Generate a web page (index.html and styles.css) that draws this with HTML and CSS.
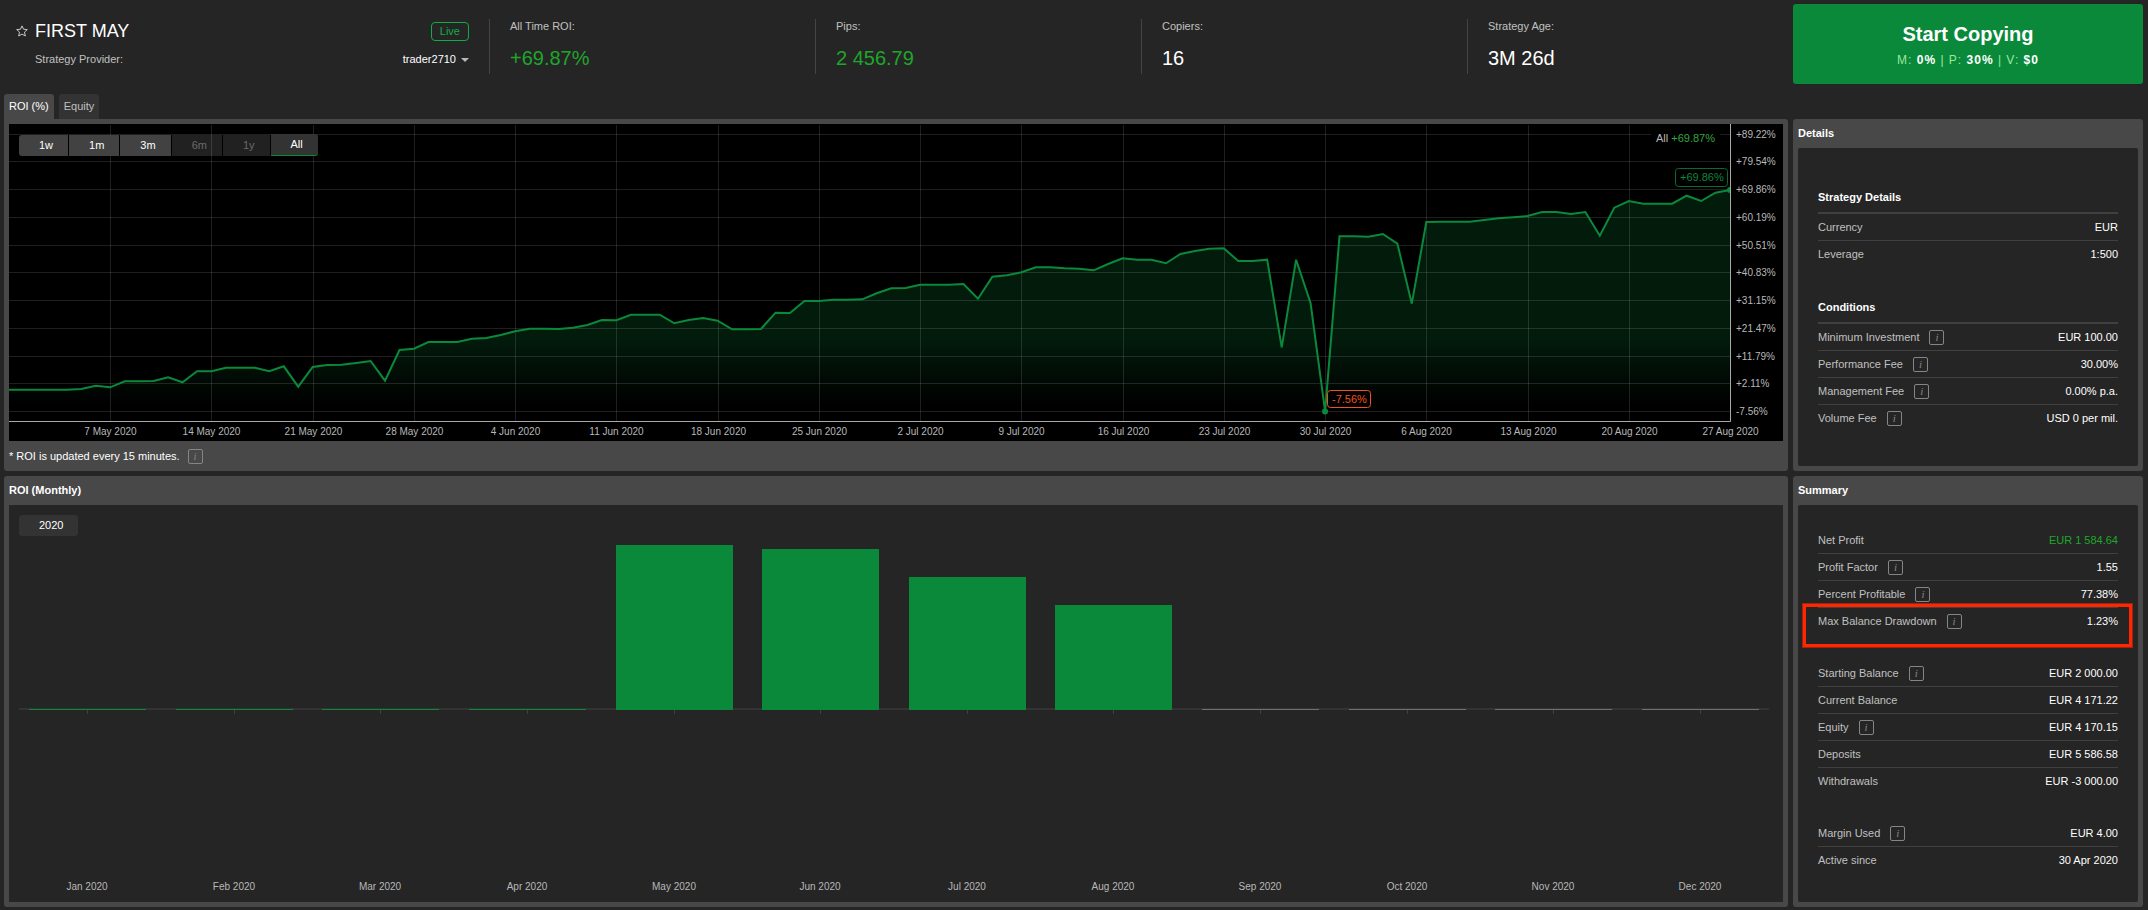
FILE: index.html
```html
<!DOCTYPE html>
<html lang="en">
<head>
    <meta charset="UTF-8">
    <meta name="viewport" content="width=device-width, initial-scale=1.0">
    <title>FIRST MAY</title>
    <link rel="stylesheet" href="styles.css">
</head>
<body>
<header class="header">
    <div class="strategy">
        <div class="strategy-row">
            <button class="star" aria-label="Add to favourites">
                <svg width="12" height="12" viewBox="0 0 12 12"><path d="M6 0.9L7.5 4.2L11.3 4.6L8.5 7.1L9.3 11L6 9.1L2.7 11L3.5 7.1L0.7 4.6L4.5 4.2Z"/></svg>
            </button>
            <h1>FIRST MAY</h1>
            <span class="live">Live</span>
        </div>
        <div class="strategy-row provider">
            <span class="label">Strategy Provider:</span>
            <button class="trader">trader2710</button>
        </div>
    </div>
    <div class="stat"><span class="label">All Time ROI:</span><span class="stat-value green">+69.87%</span></div>
    <div class="stat"><span class="label">Pips:</span><span class="stat-value green">2 456.79</span></div>
    <div class="stat"><span class="label">Copiers:</span><span class="stat-value">16</span></div>
    <div class="stat"><span class="label">Strategy Age:</span><span class="stat-value">3M 26d</span></div>
    <button class="copy">
        <span class="copy-title">Start Copying</span>
        <span class="copy-fees">M: <b>0%</b> | P: <b>30%</b> | V: <b>$0</b></span>
    </button>
</header>

<nav class="tabs">
    <button class="tab active">ROI (%)</button>
    <button class="tab">Equity</button>
</nav>

<main class="content">
    <section class="panel panel-roi">
        <div class="chart">
            <svg id="roiChart" class="roi-chart"></svg>
            <div class="buttons">
                <button>1w</button>
                <button>1m</button>
                <button>3m</button>
                <button disabled>6m</button>
                <button disabled>1y</button>
                <button class="selected">All</button>
            </div>
        </div>
        <p class="note">* ROI is updated every 15 minutes. <i class="info">i</i></p>
    </section>

    <section class="panel">
        <h2>Details</h2>
        <div class="box details">
            <h3>Strategy Details</h3>
            <dl>
                <div class="row"><dt>Currency</dt><dd>EUR</dd></div>
                <div class="row"><dt>Leverage</dt><dd>1:500</dd></div>
            </dl>
            <h3>Conditions</h3>
            <dl>
                <div class="row"><dt>Minimum Investment <i class="info">i</i></dt><dd>EUR 100.00</dd></div>
                <div class="row"><dt>Performance Fee <i class="info">i</i></dt><dd>30.00%</dd></div>
                <div class="row"><dt>Management Fee <i class="info">i</i></dt><dd>0.00% p.a.</dd></div>
                <div class="row"><dt>Volume Fee <i class="info">i</i></dt><dd>USD 0 per mil.</dd></div>
            </dl>
        </div>
    </section>

    <section class="panel">
        <h2>ROI (Monthly)</h2>
        <div class="chart monthly">
            <svg id="monthlyChart" class="monthly-chart"></svg>
            <div class="buttons">
                <button class="year">2020</button>
            </div>
        </div>
    </section>

    <section class="panel">
        <h2>Summary</h2>
        <div class="box summary">
            <dl>
                <div class="row"><dt>Net Profit</dt><dd class="green">EUR 1 584.64</dd></div>
                <div class="row"><dt>Profit Factor <i class="info">i</i></dt><dd>1.55</dd></div>
                <div class="row"><dt>Percent Profitable <i class="info">i</i></dt><dd>77.38%</dd></div>
                <div class="row marked"><dt>Max Balance Drawdown <i class="info">i</i></dt><dd>1.23%</dd></div>
            </dl>
            <dl>
                <div class="row"><dt>Starting Balance <i class="info">i</i></dt><dd>EUR 2 000.00</dd></div>
                <div class="row"><dt>Current Balance</dt><dd>EUR 4 171.22</dd></div>
                <div class="row"><dt>Equity <i class="info">i</i></dt><dd>EUR 4 170.15</dd></div>
                <div class="row"><dt>Deposits</dt><dd>EUR 5 586.58</dd></div>
                <div class="row"><dt>Withdrawals</dt><dd>EUR -3 000.00</dd></div>
            </dl>
            <dl>
                <div class="row"><dt>Margin Used <i class="info">i</i></dt><dd>EUR 4.00</dd></div>
                <div class="row"><dt>Active since</dt><dd>30 Apr 2020</dd></div>
            </dl>
        </div>
    </section>
</main>

<script src="script.js"></script>
</body>
</html>
```

FILE: styles.css
```css
* {
    box-sizing: border-box;
}
body {
    display: flex;
    flex-direction: column;
    min-height: 100vh;
    margin: 0;
    padding: 4px 5px 3px 4px;
    background-color: #252525;
    color: #fff;
    font: 11px/15px "Liberation Sans", Arial, sans-serif;
}
h1, h2, h3, p, dl, dd {
    margin: 0;
}
button {
    padding: 0;
    border: none;
    background: none;
    color: inherit;
    font: inherit;
    cursor: pointer;
}
.label {
    color: #c0c0c0;
}
.green {
    color: #1fa52b;
}

/* header */
.header {
    display: grid;
    grid-template-columns: 485px repeat(4, 1fr) 350px;
    margin-bottom: 10px;
}
.strategy {
    display: flex;
    flex-direction: column;
    gap: 9px;
    padding: 15px 20px 0 12px;
}
.strategy-row {
    display: flex;
    align-items: center;
}
.strategy-row h1 {
    flex: 1;
    margin-left: 7px;
    font-size: 18px;
    font-weight: normal;
    line-height: 24px;
}
.star {
    width: 12px;
    height: 12px;
}
.star svg {
    display: block;
    fill: none;
    stroke: #c8c8c8;
}
.live {
    padding: 1px 8px;
    border: 1px solid #0fae45;
    border-radius: 4px;
    color: #0fae45;
}
.provider {
    justify-content: space-between;
    padding-left: 19px;
}
.trader::after {
    content: "";
    display: inline-block;
    margin-left: 5px;
    border: 4px solid transparent;
    border-top-color: #b8b8b8;
    border-bottom: none;
    vertical-align: 1px;
}
.stat {
    display: flex;
    flex-direction: column;
    gap: 12px;
    height: 55px;
    margin-top: 15px;
    padding-left: 20px;
    border-left: 1px solid #444;
}
.stat-value {
    font-size: 20px;
    line-height: 24px;
}
.copy {
    display: flex;
    flex-direction: column;
    align-items: center;
    justify-content: center;
    gap: 7px;
    height: 80px;
    padding-top: 2px;
    border-radius: 3px;
    background-color: #0a893b;
}
.copy-title {
    font-size: 20px;
    font-weight: bold;
    line-height: 24px;
}
.copy-fees {
    color: #9be89b;
    font-size: 12px;
    letter-spacing: 1px;
}
.copy-fees b {
    color: #fff;
}

/* tabs */
.tabs {
    display: flex;
    gap: 5px;
}
.tab {
    height: 25px;
    padding: 0 5px;
    border-radius: 3px 3px 0 0;
    background-color: #333;
    color: #c0c0c0;
}
.tab.active {
    background-color: #484848;
    color: #fff;
}

/* panels */
.content {
    display: grid;
    flex: 1;
    grid-template-columns: minmax(0, 1fr) 350px;
    grid-template-rows: auto 1fr;
    gap: 5px;
}
.panel {
    display: flex;
    flex-direction: column;
    padding: 0 5px 5px;
    border-radius: 3px;
    background-color: #484848;
}
.panel-roi {
    padding: 5px 5px 0;
    border-top-left-radius: 0;
}
.panel h2 {
    font-size: 11px;
    line-height: 29px;
}
.note {
    display: flex;
    align-items: center;
    height: 30px;
}
.info {
    display: inline-block;
    width: 15px;
    height: 15px;
    margin-left: 10px;
    border: 1px solid #858585;
    border-radius: 2px;
    color: #858585;
    font: italic 11px/13px "Liberation Serif", serif;
    text-align: center;
}
.note .info {
    margin-left: 8px;
}
.box {
    flex: 1;
    border-radius: 2px;
    background-color: #252525;
}
.details {
    padding: 34px 20px;
}
.summary {
    padding: 22px 20px 28px;
}
.box dl + h3 {
    margin-top: 24px;
}
.box dl + dl {
    margin-top: 25px;
}
.box h3 {
    border-bottom: 2px solid #404040;
    font-size: 11px;
    line-height: 30px;
}
.row {
    display: flex;
    align-items: center;
    justify-content: space-between;
    position: relative;
    height: 27px;
    border-bottom: 1px solid #404040;
}
.row:last-child {
    border-bottom-color: transparent;
}
.row dt {
    display: flex;
    align-items: center;
    color: #c0c0c0;
}
.marked::after {
    content: "";
    position: absolute;
    inset: -4px -14px -13px -15px;
    border: 3px solid #ff2600;
    box-shadow: 0 0 0 1px #9a2512;
}

/* charts */
.chart {
    position: relative;
    background-color: #000;
}
.chart svg {
    display: block;
    width: 100%;
}
.roi-chart {
    height: 317px;
}
.monthly {
    display: flex;
    flex: 1;
    background-color: #252525;
}
.buttons {
    display: flex;
    align-items: flex-end;
    gap: 1px;
    position: absolute;
    top: 10px;
    left: 10px;
}
.buttons button {
    height: 21px;
    padding: 0 15px 0 20px;
    background-color: #424242;
}
.buttons button:first-child {
    border-radius: 3px 0 0 3px;
}
.buttons button:last-child {
    border-radius: 0 3px 3px 0;
}
.buttons button:disabled {
    background-color: rgba(255, 255, 255, 0.13);
    color: #6a6a6a;
}
.buttons .selected {
    height: 22px;
    border-bottom: 1px solid #0a893b;
    background-color: #333;
}
.buttons .year:first-child {
    border-radius: 3px;
    background-color: #333;
}
.chart text {
    fill: #b8b8b8;
    font-size: 10px;
}
.chart .callout {
    font-size: 11px;
}
.chart .callout-up {
    fill: #0a893b;
}
.chart .callout-down {
    fill: #f4511e;
}
.chart .gain {
    fill: #33a83f;
}
.grid {
    stroke: #fff;
    stroke-opacity: 0.12;
}
.axis {
    stroke: #aaa;
}
.line {
    fill: none;
    stroke: #0a893b;
    stroke-width: 2;
}
.bar {
    fill: #0a893b;
}
.bar-empty {
    fill: #707070;
}
.baseline {
    fill: #333;
}
.tick {
    fill: #404040;
}
```

FILE: script.js
```js
const roiChart = document.getElementById('roiChart');
const monthlyChart = document.getElementById('monthlyChart');

// One point per day from 30 Apr, distance from the top of the chart
const roiLine = [
    265.7, 265.7, 265.7, 265.7, 265.7, 265, 261.7, 263.3, 257.3, 257.3, 257, 253.3, 258.3, 247.3, 247.3,
    243.7, 243.7, 243.7, 247.3, 242.3, 262.7, 243, 241, 240.7, 239, 237, 256.7, 226, 224.7, 218,
    218, 218, 214.7, 214, 211, 207.3, 204.7, 204.7, 205, 203.7, 201, 196, 196.3, 190.7, 190.7,
    190.7, 199.3, 196, 194, 196.7, 205.3, 205.3, 205, 188.7, 189, 177, 177, 175.7, 175.7, 175.3,
    169.3, 164.3, 164, 160.7, 160.7, 160.7, 160, 174.7, 152.7, 151.3, 148.3, 143.3, 143.3, 144.3, 144.7,
    146.3, 140, 134.3, 135.7, 135.7, 139.3, 130, 127, 124.7, 124.3, 137, 137, 135.7, 223.3, 135.7,
    179.3, 287.3, 112.3, 112.3, 112.7, 110, 119.7, 179.7, 98, 97.7, 97.7, 97.7, 96, 94.3, 93.3,
    92, 88, 88, 90, 88, 111.7, 83.7, 77, 79.7, 79.7, 79.7, 71.7, 77, 68.7, 66
];
const dates = ['7 May', '14 May', '21 May', '28 May', '4 Jun', '11 Jun', '18 Jun', '25 Jun', '2 Jul',
    '9 Jul', '16 Jul', '23 Jul', '30 Jul', '6 Aug', '13 Aug', '20 Aug', '27 Aug'];
const levels = ['+89.22%', '+79.54%', '+69.86%', '+60.19%', '+50.51%', '+40.83%', '+31.15%',
    '+21.47%', '+11.79%', '+2.11%', '-7.56%'];

const months = ['Jan', 'Feb', 'Mar', 'Apr', 'May', 'Jun', 'Jul', 'Aug', 'Sep', 'Oct', 'Nov', 'Dec'];
const monthHeights = [1, 1, 1, 1, 165, 161, 133, 105, 0, 0, 0, 0];

function drawRoi() {
    const right = roiChart.clientWidth - 53;
    const bottom = 297;
    const step = right / (roiLine.length - 1);
    const points = roiLine.map((y, day) => `${(day * step).toFixed(1)},${y}`).join(' ');
    let svg = `<defs><linearGradient id="fill" gradientUnits="userSpaceOnUse" x1="0" y1="215" x2="0" y2="280">
        <stop offset="0" stop-color="#0a893b" stop-opacity="0.2"/>
        <stop offset="1" stop-color="#0a893b" stop-opacity="0"/>
    </linearGradient></defs>
    <polygon fill="url(#fill)" points="0,${bottom} ${points} ${right},${bottom}"/>`;

    levels.forEach((level, i) => {
        const y = Math.floor(10 + i * 27.75) + 0.5;
        svg += `<line class="grid" x1="0" x2="${right}" y1="${y}" y2="${y}"/>
            <text x="${right + 6}" y="${y + 3.5}">${level}</text>`;
    });
    dates.forEach((date, i) => {
        const x = Math.round((i + 1) * 7 * step) + 0.5;
        svg += `<line class="grid" x1="${x}" x2="${x}" y1="1" y2="${bottom}"/>
            <text x="${x}" y="311" text-anchor="middle">${date} 2020</text>`;
    });

    svg += `<polyline class="line" points="${points}"/>
        <path class="axis" fill="none" d="M0 ${bottom + 0.5}H${right + 0.5}V0"/>`;

    // lowest and last points
    const low = 91 * step;
    svg += `<circle class="bar" cx="${low}" cy="287.5" r="3"/>
        <rect x="${Math.round(low) + 2.5}" y="266.5" width="43" height="17" rx="3" stroke="#f4511e"/>
        <text class="callout callout-down" x="${Math.round(low) + 7}" y="279">-7.56%</text>
        <path class="bar" d="M${right} 63A3 3 0 0 0 ${right} 69Z"/>
        <rect x="${right - 54.5}" y="44.5" width="52" height="18" rx="3" stroke="#0a6b30"/>
        <text class="callout callout-up" x="${right - 50}" y="57">+69.86%</text>
        <rect x="${right - 79}" y="4" width="69" height="20"/>
        <text class="callout" x="${right - 74}" y="18">All <tspan class="gain">+69.87%</tspan></text>`;
    roiChart.innerHTML = svg;
}

function drawMonthly() {
    const width = monthlyChart.clientWidth;
    const height = monthlyChart.clientHeight;
    const band = (width - 15) / 12;
    const base = 205;
    let svg = `<rect class="baseline" x="10" y="${base - 2}" width="${width - 24}" height="2"/>`;
    months.forEach((month, i) => {
        const center = Math.round(5 + band * (i + 0.5));
        const barWidth = Math.round(band * 0.8);
        const x = center - Math.floor(barWidth / 2);
        const barHeight = monthHeights[i];
        svg += `<rect class="tick" x="${center}" y="${base}" width="1" height="4"/>
            <rect class="${barHeight ? 'bar' : 'bar-empty'}" x="${x}" y="${base - (barHeight || 1)}" width="${barWidth}" height="${barHeight || 1}"/>
            <text x="${center}" y="${height - 12}" text-anchor="middle">${month} 2020</text>`;
    });
    monthlyChart.innerHTML = svg;
}

function draw() {
    drawRoi();
    drawMonthly();
}

window.addEventListener('resize', draw);
draw();
```
